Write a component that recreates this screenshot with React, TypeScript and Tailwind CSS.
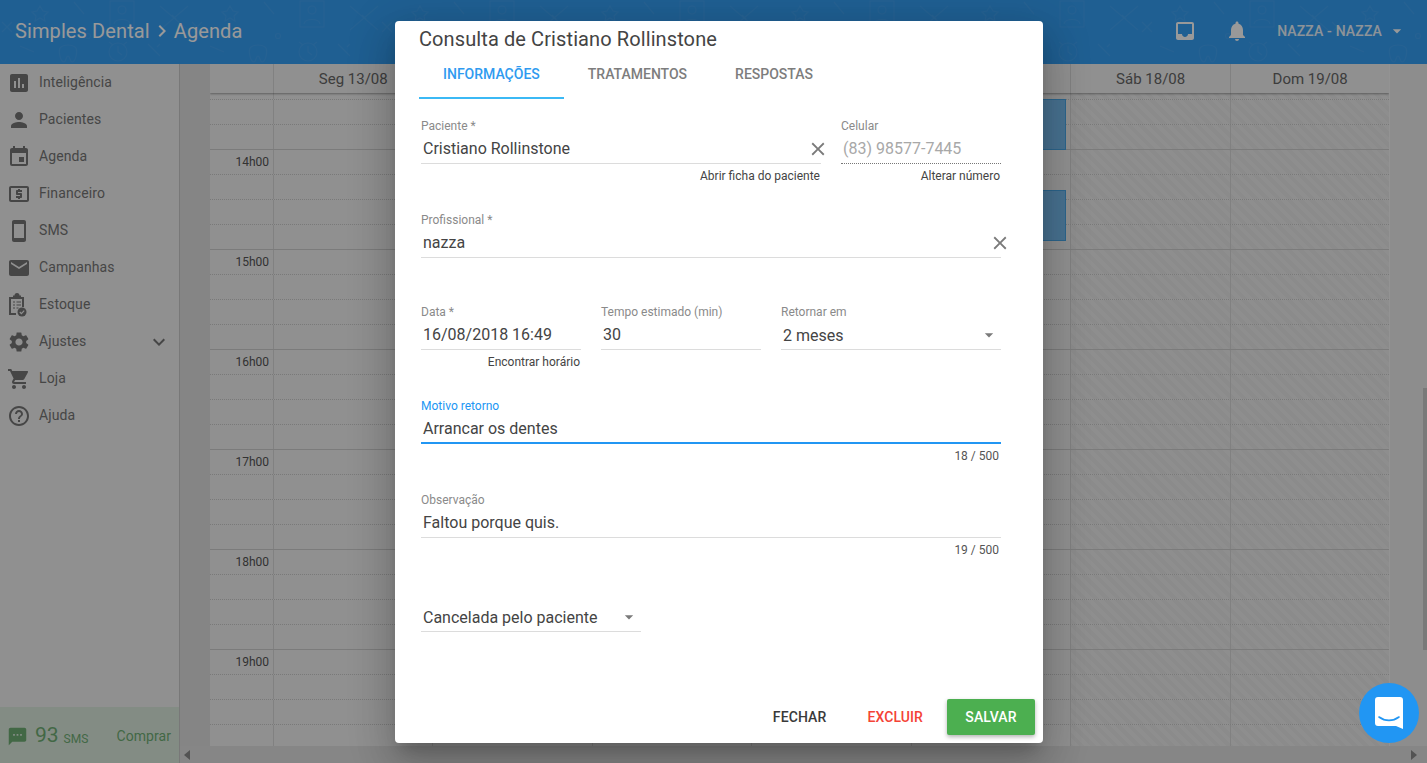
import type { ReactNode } from "react";
import {
  MdArrowDropDown,
  MdChevronRight,
  MdClose,
  MdEmail,
  MdEvent,
  MdExpandMore,
  MdHelpOutline,
  MdInbox,
  MdInsertChart,
  MdLocalAtm,
  MdNotifications,
  MdPerson,
  MdSettings,
  MdShoppingCart,
  MdSmartphone,
  MdSms,
} from "react-icons/md";

function StockIcon() {
  return (
    <svg viewBox="0 0 20 24" className="w-5 h-6" fill="none">
      <path d="M2 4h4V2.5h1.5a2.5 2.5 0 0 1 5 0H14V4h3v10h-2V6H4v14h5v2H2z" fill="currentColor" />
      <path d="M6 9h2M6 12h2M6 15h2M9.5 9H14M9.5 12H14M9.5 15h2" stroke="currentColor" strokeWidth="1.2" />
      <circle cx="15" cy="19" r="4.5" fill="currentColor" />
      <path d="M12.8 19l1.6 1.6 2.8-2.9" stroke="#f0f0f0" strokeWidth="1.2" />
    </svg>
  );
}

const menu = [
  { name: "Inteligência", icon: <MdInsertChart size={24} /> },
  { name: "Pacientes", icon: <MdPerson size={24} /> },
  { name: "Agenda", icon: <MdEvent size={24} /> },
  { name: "Financeiro", icon: <MdLocalAtm size={24} /> },
  { name: "SMS", icon: <MdSmartphone size={24} /> },
  { name: "Campanhas", icon: <MdEmail size={24} /> },
  { name: "Estoque", icon: <StockIcon /> },
  { name: "Ajustes", icon: <MdSettings size={24} />, more: true },
  { name: "Loja", icon: <MdShoppingCart size={24} /> },
  { name: "Ajuda", icon: <MdHelpOutline size={24} /> },
];

// the middle days sit behind the dialog, so they carry no label
const days = [
  { id: "seg", label: "Seg 13/08" },
  { id: "ter", label: "" },
  { id: "qua", label: "" },
  { id: "qui", label: "" },
  { id: "sex", label: "" },
  { id: "sab", label: "Sáb 18/08" },
  { id: "dom", label: "Dom 19/08" },
];

// one entry per 25px slot, starting right under the day header
const slots = Array.from({ length: 26 }, (_, i) => i);
const hourLabel = (i: number) => (i % 4 === 2 ? `${14 + (i - 2) / 4}h00` : "");

function HeaderPattern() {
  return (
    <svg className="absolute inset-0 w-full h-full text-white opacity-[0.05]" fill="none">
      <defs>
        <pattern id="doodles" width="190" height="64" patternUnits="userSpaceOnUse">
          <g stroke="currentColor" strokeWidth="1.2">
            <rect x="110" y="1" width="24" height="26" />
            <circle cx="122" cy="10" r="4" />
            <path d="M114 24c1-6 15-6 16 0" />
            <path d="M160 6l28 24M188 6l-28 24M172 15l4 4" />
            <circle cx="118" cy="52" r="9" />
            <path d="M118 46v6l4 3M109 42l4 3M127 42l-4 3" />
            <path d="M40 6l3 5 5 1-4 4 1 5-5-3-5 3 1-5-4-4 5-1z" />
            <path d="M60 48c4-4 12-4 16 0 2 5-1 14-4 14-2 0-2-6-4-6s-2 6-4 6c-3 0-6-9-4-14z" />
            <path d="M2 22l10 10M12 22L2 32" />
            <circle cx="88" cy="36" r="2.5" />
            <path d="M74 2l10 12M20 46l14 6" />
            <path d="M148 44l12 12M160 44l-3 3" />
          </g>
        </pattern>
      </defs>
      <rect width="100%" height="100%" fill="url(#doodles)" />
    </svg>
  );
}

function Field({
  label,
  value,
  className,
  helper,
  counter,
  focused,
  muted,
  dotted,
  select,
  trailing,
}: {
  label?: string;
  value: string;
  className: string;
  helper?: string;
  counter?: string;
  focused?: boolean;
  muted?: boolean;
  dotted?: boolean;
  select?: boolean;
  trailing?: ReactNode;
}) {
  return (
    <div className={className}>
      <div className={`h-[15px] text-[12px] leading-[15px] ${focused ? "text-[#2196f3]" : "text-[#8a8a8a]"}`}>{label}</div>
      <div
        className={`h-[30px] flex items-center justify-between pl-[2px] text-[16px] ${muted ? "text-[#a8a8a8]" : "text-[#444444]"} ${
          focused
            ? "border-b-2 border-[#2196f3]"
            : dotted
              ? "border-b border-dotted border-[#777777]"
              : "border-b border-[#dcdcdc]"
        }`}
      >
        <span className={select ? "pt-[2px]" : focused ? "pt-[1px]" : ""}>{value}</span>
        {trailing}
      </div>
      {helper && <div className="mt-[5px] pr-[1px] text-right text-[12px] leading-[15px] text-[#444444]">{helper}</div>}
      {counter && <div className="mt-[5px] pr-[2px] text-right text-[12px] leading-[15px] text-[#555555]">{counter}</div>}
    </div>
  );
}

const selectArrow = <MdArrowDropDown size={20} className="text-[#7a7a7a] mr-[2px]" />;

const hatch = "bg-[repeating-linear-gradient(45deg,#e8e8e8_0,#e8e8e8_4px,#ededed_4px,#ededed_8px)]";

export default function App() {
  return (
    <div className="relative w-[1427px] h-[763px] overflow-hidden bg-[#f0f0f0] font-['Roboto',sans-serif]">
      <header className="relative h-16 bg-[#359ef3] flex items-center justify-between overflow-hidden pb-[2px] text-white">
        <HeaderPattern />
        <div className="relative flex items-center pl-[15px] text-[20px] tracking-[0.1px]">
          <span>Simples Dental</span>
          <MdChevronRight size={24} className="mx-[0px]" />
          <span>Agenda</span>
        </div>
        <div className="relative flex items-center">
          <MdInbox size={24} />
          <MdNotifications size={24} className="ml-[28px]" />
          <span className="ml-[28px] text-[14px] font-medium tracking-[0.15px] opacity-90">NAZZA - NAZZA</span>
          <MdArrowDropDown size={20} className="ml-[5px] mr-[20px]" />
        </div>
      </header>

      <div className="flex h-[699px]">
        <aside className="w-[180px] shrink-0 flex flex-col justify-between border-r border-[#c8c8c8]">
          <nav>
            {menu.map((item) => (
              <div key={item.name} className="h-[37px] flex items-center text-[14px] tracking-[0.1px] text-[#757575]">
                <span className="w-[39px] pl-[7px] flex items-center">{item.icon}</span>
                <span>{item.name}</span>
                {item.more && <MdExpandMore size={24} className="ml-auto mr-[8px]" />}
              </div>
            ))}
          </nav>
          <div className="h-[56px] bg-[#dbeadd] flex items-center pl-[7px] pr-[8px] pt-[2px] text-[#6fae74]">
            <MdSms size={21} />
            <span className="ml-[7px] text-[21px]">93</span>
            <span className="ml-[5px] mt-[5px] text-[12px]">SMS</span>
            <span className="ml-auto text-[14px] tracking-[0.05px]">Comprar</span>
          </div>
        </aside>

        <main className="relative isolate flex-1 flex flex-col min-w-0">
          <div className="flex-1 flex min-h-0">
            <div className="w-[30px] shrink-0 bg-[#dedede]" />
            <div className="w-[1179.4px] shrink-0 flex flex-col overflow-hidden bg-[#f0f0f0]">
              <div className="h-[29px] shrink-0 flex shadow-[0_1px_2px_rgba(0,0,0,0.35)] relative z-10 bg-[#f0f0f0] text-[15px] text-[#666666]">
                <div className="w-[63px] shrink-0" />
                {days.map((d) => (
                  <div key={d.id} className="flex-1 flex items-center justify-center pt-[1px] border-l border-[#d8d8d8]">
                    {d.label}
                  </div>
                ))}
              </div>
              <div className="flex-1 min-h-0">
                <div className="h-[7px] border-b border-dotted border-[#cacaca] flex">
                  <div className="w-[63px]" />
                  {days.map((d, i) => (
                    <div key={d.id} className={`flex-1 border-l border-[#d8d8d8] ${i > 4 ? hatch : ""}`} />
                  ))}
                </div>
                {slots.map((s) => (
                  <div
                    key={s}
                    className={`h-[25px] flex border-b ${(s + 3) % 4 === 0 ? "border-solid border-[#cecece]" : "border-dotted border-[#cacaca]"}`}
                  >
                    <div className="w-[63px] shrink-0 pr-[4px] pt-[5px] text-right text-[12px] leading-[15px] text-[#555555]">
                      {hourLabel(s)}
                    </div>
                    {days.map((d, i) => (
                      <div key={d.id} className={`relative flex-1 border-l border-[#d8d8d8] ${i > 4 ? hatch : ""}`}>
                        {i === 4 && (s === 0 || s === 3) && (
                          <div
                            className={`absolute z-10 right-[4px] w-[60px] h-[51px] bg-[#78bff2] border border-[#4aa8ea] ${s === 0 ? "top-[-1px]" : "top-[15px]"}`}
                          />
                        )}
                      </div>
                    ))}
                  </div>
                ))}
              </div>
            </div>
            <div className="flex-1 flex justify-end bg-[#ececec] border-l border-[#f5f5f5]">
              <div className="w-[4px] h-[262px] mt-[324px] bg-[#cacaca]" />
            </div>
          </div>
          <div className="h-[17px] shrink-0 bg-[#e0e0e0] flex items-center justify-between pl-[4px] pr-[10px]">
            <span className="w-0 h-0 border-y-[5px] border-y-transparent border-r-[6px] border-r-[#8a8a8a]" />
            <span className="w-0 h-0 border-y-[5px] border-y-transparent border-l-[6px] border-l-[#8a8a8a]" />
          </div>
        </main>
      </div>

      {/* dialog scrim */}
      <div className="absolute inset-0 bg-black/40" />

      <div className="absolute left-[395px] top-[21px] w-[648px] h-[722px] flex flex-col bg-white rounded-[4px] shadow-[0_11px_15px_-7px_rgba(0,0,0,0.2),0_24px_38px_3px_rgba(0,0,0,0.14),0_9px_46px_8px_rgba(0,0,0,0.12)]">
        <div className="h-[29px] pl-[24px] pt-[7px] text-[20px] leading-[22px] tracking-[0.1px] text-[#444444]">
          Consulta de Cristiano Rollinstone
        </div>
        <div className="h-[49px] pl-[24px] flex text-[14px] font-medium text-[#7d7d7d]">
          <div className="px-[24px] flex items-center pt-[1px] border-b-2 border-[#3bb9f5] text-[#2f9bf0]">INFORMAÇÕES</div>
          <div className="px-[24px] flex items-center pt-[1px] pb-[2px]">TRATAMENTOS</div>
          <div className="px-[24px] flex items-center pt-[1px] pb-[2px]">RESPOSTAS</div>
        </div>

        <div className="flex-1 pl-[26px] pr-[42px] pt-[20px]">
          <div className="h-[94px] flex gap-5">
            <Field
              className="w-[400px]"
              label="Paciente *"
              value="Cristiano Rollinstone"
              helper="Abrir ficha do paciente"
              trailing={<MdClose size={22} className="text-[#7a7a7a] -mr-[8px]" />}
            />
            <Field className="flex-1" label="Celular" value="(83) 98577-7445" muted dotted helper="Alterar número" />
          </div>
          <div className="h-[92px]">
            <Field
              label="Profissional *"
              value="nazza"
              className="w-full"
              trailing={<MdClose size={22} className="text-[#7a7a7a] -mr-[10px] mt-[1px]" />}
            />
          </div>
          <div className="h-[94px] flex gap-5">
            <Field className="w-[160px]" label="Data *" value="16/08/2018 16:49" helper="Encontrar horário" />
            <Field className="w-[160px]" label="Tempo estimado (min)" value="30" />
            <Field className="flex-1" label="Retornar em" value="2 meses" select trailing={selectArrow} />
          </div>
          <div className="h-[94px]">
            <Field label="Motivo retorno" value="Arrancar os dentes" className="w-full" focused counter="18 / 500" />
          </div>
          <div className="h-[109px]">
            <Field label="Observação" value="Faltou porque quis." className="w-full" counter="19 / 500" />
          </div>
          <Field value="Cancelada pelo paciente" className="w-[220px] -mt-[15px]" select trailing={selectArrow} />
        </div>

        <div className="h-[36px] mb-[8px] pr-[8px] flex items-center justify-end text-[14px] font-medium tracking-[0.1px]">
          <button className="mr-[41px] text-[#3a3a3a]">FECHAR</button>
          <button className="mr-[24px] text-[#f44336]">EXCLUIR</button>
          <button className="w-[88px] h-[36px] rounded-[2px] bg-[#4caf50] text-white shadow-[0_2px_4px_rgba(0,0,0,0.3)]">SALVAR</button>
        </div>
      </div>

      {/* chat launcher */}
      <div className="absolute left-[1359px] top-[683px] w-[60px] h-[60px] rounded-full bg-[#2196f3] flex items-center justify-center">
        <svg viewBox="0 0 28 32" className="w-[28px] h-[32px]">
          <path d="M3 0h22a3 3 0 0 1 3 3v29l-7-3H3a3 3 0 0 1-3-3V3a3 3 0 0 1 3-3z" fill="#ffffff" />
          <path d="M4 20c6 4.500 14 4.500 20 0" fill="none" stroke="#2196f3" strokeWidth="1.600" strokeLinecap="round" />
        </svg>
      </div>
    </div>
  );
}
